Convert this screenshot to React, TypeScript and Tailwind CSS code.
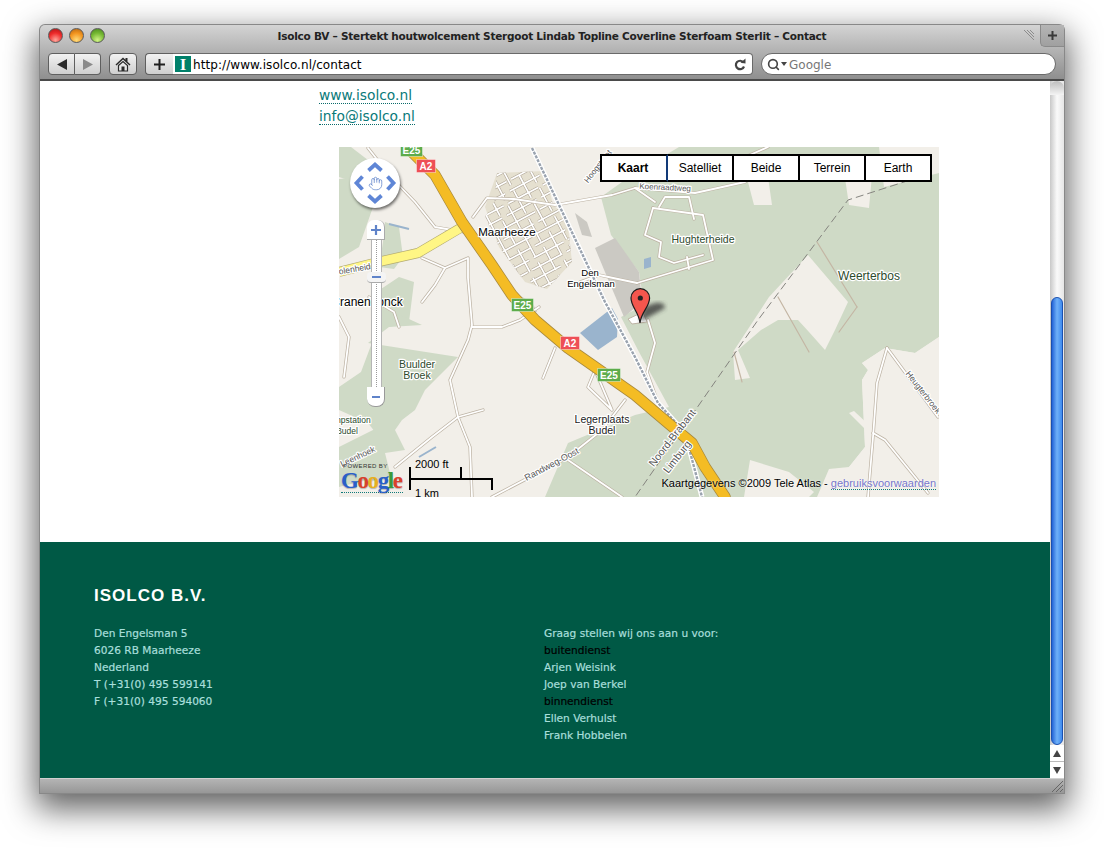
import React from "react";
import { Hand, Search } from "lucide-react";

const lucida = "font-['DejaVu_Sans',sans-serif]";

// road centre lines in map coordinates
const roads: string[] = [
  "29,1 52,30 76,55 96,80 125,85",
  "134,70 148,51 175,52 216,58 273,48 296,41 356,46 406,35 440,10",
  "83,111 106,121 96,138 83,155",
  "106,121 129,111 129,131 133,178 129,193 111,233 119,270 131,300 133,350",
  "133,180 163,180 181,173 200,160",
  "56,320 93,290 119,270 144,263",
  "153,350 229,310 263,283 286,253",
  "229,313 283,350",
  "249,240 273,263 256,223 249,240",
  "216,201 204,231",
  "548,201 538,236 534,290 529,350",
  "534,286 546,293 589,346",
  "548,201 599,270",
  "314,61 364,68 374,113 298,136",
  "314,61 306,88 322,95 320,110 335,116 364,108",
  "320,60 326,50 350,50 355,72",
  "348,110 350,122",
  "296,41 316,55",
  "309,173 316,196 308,225 319,256",
  "241,135 260,128 298,136",
  "429,0 395,15 380,30",
  "0,170 10,190 5,230",
  "30,150 55,165 60,180",
];

const trails: string[] = [
  "478,95 518,160",
  "518,160 500,185",
  "439,150 470,205",
  "395,205 403,235",
];

// name labels, x/y are the text centre
const labels = [
  { t: "Maarheeze", x: 168, y: 89, s: 11.5, c: "#000" },
  { t: "Den", x: 251, y: 129, s: 9.5, c: "#000" },
  { t: "Engelsman", x: 252, y: 140, s: 9.5, c: "#000" },
  { t: "Hughterheide", x: 364, y: 96, s: 10.5, c: "#2c4a2c" },
  { t: "Weerterbos", x: 530, y: 133, s: 12, c: "#2c4a2c" },
  { t: "Buulder", x: 78, y: 221, s: 10.5, c: "#2c4a2c" },
  { t: "Broek", x: 78, y: 232, s: 10.5, c: "#2c4a2c" },
  { t: "Legerplaats", x: 263, y: 276, s: 10.5, c: "#222" },
  { t: "Budel", x: 263, y: 287, s: 10.5, c: "#222" },
  { t: "Cranendonck", x: 28, y: 159, s: 12, c: "#000" },
];

const rotated = [
  { t: "Noord-Brabant", x: 336, y: 293, r: -52, s: 10.5 },
  { t: "Limburg", x: 341, y: 312, r: -52, s: 10.5 },
  { t: "Randweg-Oost", x: 214, y: 320, r: -28, s: 9 },
  { t: "Heugterbroek", x: 582, y: 247, r: 52, s: 8.5 },
  { t: "Koenraadtweg", x: 326, y: 43, r: 3, s: 8 },
  { t: "Molenheide", x: 15, y: 125, r: -10, s: 8.5 },
  { t: "Hoogstraat", x: 261, y: 21, r: -52, s: 8 },
  { t: "Leenhoek", x: 20, y: 312, r: -25, s: 8.5 },
];

const shields = [
  { t: "E25", x: 61, y: -4, w: 22, c: "#5dac4b" },
  { t: "A2", x: 77, y: 12, w: 19, c: "#ee4f56" },
  { t: "E25", x: 172, y: 151, w: 22, c: "#5dac4b" },
  { t: "A2", x: 221, y: 189, w: 19, c: "#ee4f56" },
  { t: "E25", x: 258, y: 221, w: 23, c: "#5dac4b" },
];

const ModeButton = ({ label, first }: { label: string; first?: boolean }) => (
  <div
    className={`h-full flex items-center justify-center bg-white border-y-2 border-r-2 border-black text-[12px] text-black ${
      first ? "w-[68px] border-l-2 font-bold border-r-[#123a78] pr-[2px]" : "w-[66px]"
    }`}
  >
    {label}
  </div>
);

const MapView = () => (
  <div className="relative w-[600px] h-[350px] ml-[299px] mt-[20px] overflow-hidden bg-[#f2efe9] font-['Liberation_Sans',sans-serif]">
    <svg width="600" height="350" viewBox="0 0 600 350" className="block">
      <defs>
        <clipPath id="town">
          <polygon points="158,26 206,24 214,58 228,70 233,115 208,142 186,135 160,100 146,70 155,55" />
        </clipPath>
        <filter id="pinShadow">
          <feGaussianBlur stdDeviation="2" />
        </filter>
      </defs>

      {/* forest and heath */}
      <g fill="#cfdac6">
        <polygon points="262,50 290,30 340,0 600,0 600,190 576,206 546,201 523,216 529,223 523,233 526,300 510,320 500,350 206,350 229,296 296,268 330,260 300,205 282,170 305,158 300,125 272,88" />
        <polygon points="0,30 30,40 38,20 12,0 0,0" />
        <polygon points="0,32 20,30 34,60 20,100 0,112" />
        <polygon points="46,75 60,80 64,110 55,122 40,120 44,95" />
        <polygon points="30,150 60,130 75,135 70,175 50,180" />
        <polygon points="46,161 83,178 50,180 29,196 119,210 86,243 76,263 63,273 56,283 66,303 46,306 52,330 30,335 40,290 29,276 0,263 0,240 22,225" />
        <polygon points="0,300 40,280 40,330 0,340" />
      </g>
      {/* open ground inside the forest */}
      <g fill="#f2efe9">
        <polygon points="409,35 429,30 433,58 415,58" />
        <polygon points="506,31 533,28 530,61 510,58" />
        <polygon points="540,0 600,0 600,26 545,40" />
        <polygon points="469,108 509,155 496,183 486,203 470,185 459,173 439,173 422,183 399,203 411,231 396,233 394,205 430,150" />
        <polygon points="600,190 576,206 546,201 523,216 529,223 523,233 526,300 510,320 490,322 478,350 600,350" />
        <polygon points="411,313 450,325 475,345 470,350 405,350" />
        <polygon points="510,266 515,264 530,278 526,282" />
      </g>
      <polygon points="146,60 158,26 206,24 214,58 228,70 233,115 208,142 186,135 160,100" fill="#e5e0d0" />

      {/* grey and water areas */}
      <polygon points="236,66 248,75 253,90 243,88" fill="#cbc9c3" />
      <polygon points="256,101 276,91 300,125 303,155 285,170 266,125" fill="#cbc9c3" />
      <polygon points="173,145 193,155 198,165 185,165" fill="#cbc9c3" />
      <polygon points="241,186 273,161 279,172 278,190 259,203" fill="#9ab4cd" />
      <polygon points="305,112 312,110 312,120 305,122" fill="#9ab4cd" />
      <path d="M50 77 L70 82 M97 300 L80 310 M88 219 L85 222" stroke="#9ab4cd" strokeWidth="2" fill="none" />

      <g fill="none" strokeLinejoin="round" strokeLinecap="round">
        {/* town streets */}
        <g clipPath="url(#town)">
          <g transform="rotate(-28 190 85)">
            {Array.from({ length: 20 }).map((_, i) => (
              <line key={`h${i}`} x1="110" x2="270" y1={-10 + i * 10} y2={-10 + i * 10} stroke="#ada394" strokeWidth="2.8" strokeDasharray="34 5" strokeDashoffset={i * 7} strokeLinecap="butt" />
            ))}
            {Array.from({ length: 14 }).map((_, i) => (
              <line key={`v${i}`} x1={112 + i * 12} x2={112 + i * 12} y1="-10" y2="190" stroke="#ada394" strokeWidth="2.8" strokeDasharray="26 6" strokeDashoffset={i * 11} strokeLinecap="butt" />
            ))}
            {Array.from({ length: 20 }).map((_, i) => (
              <line key={`hw${i}`} x1="110" x2="270" y1={-10 + i * 10} y2={-10 + i * 10} stroke="#fff" strokeWidth="1.7" strokeDasharray="34 5" strokeDashoffset={i * 7} strokeLinecap="butt" />
            ))}
            {Array.from({ length: 14 }).map((_, i) => (
              <line key={`vw${i}`} x1={112 + i * 12} x2={112 + i * 12} y1="-10" y2="190" stroke="#fff" strokeWidth="1.7" strokeDasharray="26 6" strokeDashoffset={i * 11} strokeLinecap="butt" />
            ))}
          </g>
        </g>

        {roads.map((p) => (
          <polyline key={`c${p}`} points={p} stroke="#bdb3a4" strokeWidth="3.2" />
        ))}
        {roads.map((p) => (
          <polyline key={`w${p}`} points={p} stroke="#fff" strokeWidth="1.8" />
        ))}
        {trails.map((p) => (
          <polyline key={p} points={p} stroke="#c4b6a4" strokeWidth="1.2" />
        ))}

        {/* railway */}
        <polyline points="193,1 266,155 276,173 296,210 319,256 346,286 363,350" stroke="#fff" strokeWidth="5" strokeLinecap="butt" />
        <polyline points="193,1 266,155 276,173 296,210 319,256 346,286 363,350" stroke="#9aa3af" strokeWidth="2.4" strokeDasharray="3 1.2" strokeLinecap="butt" />

        {/* province border */}
        <polyline points="593,26 509,53 419,173 296,350" stroke="#85847f" strokeWidth="1" strokeDasharray="8 4" strokeLinecap="butt" />

        {/* regional road */}
        <polyline points="0,125 39,115 79,106 96,96 123,80" stroke="#b3aa70" strokeWidth="10" strokeLinecap="butt" />
        <polyline points="0,125 39,115 79,106 96,96 125,79" stroke="#fff685" strokeWidth="8.8" strokeLinecap="butt" />

        {/* motorway */}
        <polyline points="68,0 96,28 123,75 153,118 173,148 196,173 229,201 296,248 329,276 353,296 366,320 386,350" stroke="#a88a3e" strokeWidth="11.5" strokeLinejoin="round" />
        <polyline points="68,0 96,28 123,75 153,118 173,148 196,173 229,201 296,248 329,276 353,296 366,320 386,350" stroke="#f4bc24" strokeWidth="10" strokeLinejoin="round" />
      </g>

      {/* small building under the pin */}
      <polygon points="289,172 304,165 308,175 293,177" fill="#fff" stroke="#bdb3a4" />

      {/* labels */}
      <g textAnchor="middle" className="[paint-order:stroke]" stroke="#fff" strokeWidth="2.4" strokeLinejoin="round">
        {labels.map((l) => (
          <text key={l.t} x={l.x} y={l.y} fontSize={l.s} fill={l.c}>
            {l.t}
          </text>
        ))}
        {rotated.map((l) => (
          <text key={l.t} transform={`translate(${l.x} ${l.y}) rotate(${l.r})`} fontSize={l.s} fill="#555">
            {l.t}
          </text>
        ))}
        <text x="8" y="276" fontSize="8.5" fill="#2c4a2c">Pompstation</text>
        <text x="8" y="287" fontSize="8.5" fill="#2c4a2c">Budel</text>
      </g>

      {/* road shields */}
      {shields.map((s) => (
        <g key={`${s.t}${s.x}`}>
          <rect x={s.x + 0.5} y={s.y + 0.5} width={s.w} height="13" fill={s.c} stroke="#fff" strokeOpacity="0.4" />
          <text x={s.x + s.w / 2 + 0.5} y={s.y + 11} textAnchor="middle" fontSize="10" fontWeight="bold" fill="#fff">
            {s.t}
          </text>
        </g>
      ))}

      {/* marker */}
      <path d="M301 175 L326 161 Q326 155 316 156 L305 160 Z" fill="#333" opacity="0.75" filter="url(#pinShadow)" />
      <path d="M301 176 C300 165 292 160 292 151 A9.3 9.3 0 1 1 310.6 151 C310.6 160 302 165 301 176 Z" fill="#f4564d" stroke="#1c1c1c" strokeWidth="1.2" />
      <circle cx="301.3" cy="151" r="2.6" fill="#222" />
    </svg>

    {/* pan control */}
    <div className="absolute left-[11px] top-[11px] w-[50px] h-[50px] rounded-full bg-white shadow-[1px_2px_3px_rgba(0,0,0,0.55)] flex items-center justify-center">
      <Hand size={15} strokeWidth={1.2} className="text-[#5f83c9]" />
      <svg width="50" height="50" viewBox="0 0 50 50" className="absolute left-0 top-0" fill="none" stroke="#5f86d6" strokeWidth="3.8">
        <path d="M18.500 12.500 L25 6.500 L31.500 12.500" />
        <path d="M18.500 37.500 L25 43.500 L31.500 37.500" />
        <path d="M12.500 18.500 L6.500 25 L12.500 31.500" />
        <path d="M37.500 18.500 L43.500 25 L37.500 31.500" />
      </svg>
    </div>

    {/* zoom slider */}
    <div className="absolute left-[28px] top-[73px] w-[18px] h-[187px] flex flex-col items-center">
      <div className="w-[18px] h-[20px] rounded-t-[7px] bg-white border-r border-b border-[#aaa] flex items-center justify-center text-[#5f83c9]">
        <svg width="10" height="10" viewBox="0 0 10 10"><path d="M5 0V10M0 5H10" stroke="currentColor" strokeWidth="2.2" /></svg>
      </div>
      <div className="relative flex-1 w-[11px] bg-white border-x border-[#b5b5b5] flex justify-center">
        <div className="w-px h-full border-l border-dotted border-[#9a9a9a]" />
        <div className="absolute left-[-5px] top-[32px] w-[19px] h-[11px] rounded-[4px] bg-[#f4f4f4] border-b border-[#aaa] flex items-center justify-center">
          <div className="w-[9px] h-[2px] bg-[#5f83c9]" />
        </div>
      </div>
      <div className="w-[18px] h-[20px] rounded-b-[8px] bg-white border-r border-b border-[#999] flex items-center justify-center">
        <div className="w-[8px] h-[2px] bg-[#5f83c9]" />
      </div>
    </div>

    {/* map type buttons */}
    <div className="absolute left-[261px] top-[7px] h-[28px] flex">
      <ModeButton label="Kaart" first />
      <ModeButton label="Satelliet" />
      <ModeButton label="Beide" />
      <ModeButton label="Terrein" />
      <ModeButton label="Earth" />
    </div>

    {/* google logo */}
    <div className="absolute left-[2px] top-[316px] w-[62px] border-b border-dotted border-[#0f7a7a] pb-[1px] leading-none">
      <div className="text-[6px] leading-[7px] tracking-[0.4px] text-[#333] pl-[2px]">POWERED BY</div>
      <div className="font-['Liberation_Serif',serif] text-[23px] leading-[21px] tracking-[-1.4px] font-bold [text-shadow:0_1px_1px_rgba(0,0,0,0.25)]">
        <span className="text-[#2a5fc9]">G</span>
        <span className="text-[#d9412c]">o</span>
        <span className="text-[#e8b020]">o</span>
        <span className="text-[#2a5fc9]">g</span>
        <span className="text-[#3a9a3a]">l</span>
        <span className="text-[#d9412c]">e</span>
      </div>
    </div>

    {/* scale */}
    <div className="absolute left-[70px] top-[320px] w-[84px] h-[23px] border-l-2 border-black">
      <div className="absolute left-0 top-[11px] w-[82px] h-[2px] bg-black" />
      <div className="absolute left-[49px] top-0 w-[2px] h-[12px] bg-black" />
      <div className="absolute right-0 top-[12px] w-[2px] h-[11px] bg-black" />
      <span className="absolute left-[4px] top-[-9px] text-[11px] leading-[13px] text-black whitespace-nowrap">2000 ft</span>
      <span className="absolute left-[4px] top-[20px] text-[11px] leading-[13px] text-black whitespace-nowrap">1 km</span>
    </div>

    {/* copyright */}
    <div className="absolute right-[3px] top-[330px] text-[11px] leading-[13px] text-black whitespace-nowrap [text-shadow:0_0_2px_#fff]">
      Kaartgegevens ©2009 Tele Atlas -{" "}
      <span className="text-[#7777cc] border-b border-dotted border-[#0f7a7a]">gebruiksvoorwaarden</span>
    </div>
  </div>
);

const TrafficLight = ({ colors }: { colors: string }) => (
  <div className={`w-[15px] h-[15px] rounded-full border border-[#5a5a5a] ${colors}`} />
);

const TitleBar = () => (
  <div className="relative h-[28px] shrink-0 flex items-center justify-center">
    <div className="absolute left-[8px] top-[3px] flex gap-[6px]">
      <TrafficLight colors="bg-[radial-gradient(circle_at_50%_85%,#ffa79c,#ee2a2a_55%,#a81416)]" />
      <TrafficLight colors="bg-[radial-gradient(circle_at_50%_85%,#ffdc7a,#f2941e_55%,#b06414)]" />
      <TrafficLight colors="bg-[radial-gradient(circle_at_50%_85%,#d2f487,#75b832_55%,#47851e)]" />
    </div>
    <span className={`${lucida} text-[10.5px] tracking-[-0.25px] font-bold text-[#222] mt-[-4px]`}>
      Isolco BV – Stertekt houtwolcement Stergoot Lindab Topline Coverline Sterfoam Sterlit – Contact
    </span>
    <svg width="12" height="12" viewBox="0 0 12 12" className="absolute right-[29px] top-[4px]" stroke="#8c8c8c">
      <path d="M1 1 L11 11 M4 1 L11 8 M7 1 L11 5" />
    </svg>
    <div className="absolute right-0 top-0 w-[24px] h-[22px] bg-linear-to-b from-[#b5b5b5] to-[#a0a0a0] border-l border-b border-[#8a8a8a] rounded-bl-[5px] flex items-center justify-center">
      <svg width="9" height="9" viewBox="0 0 9 9"><path d="M4.500 0V9M0 4.500H9" stroke="#3a3a3a" strokeWidth="2" /></svg>
    </div>
  </div>
);

const ToolButton = ({ className, children }: { className: string; children: React.ReactNode }) => (
  <div className={`h-[22px] border border-[#5f5f5f] bg-linear-to-b from-[#f2f2f2] to-[#cfcfcf] flex items-center justify-center ${className}`}>
    {children}
  </div>
);

const Toolbar = () => (
  <div className="h-[26px] shrink-0 flex items-start pl-[8px] pr-[8px]">
    <div className="flex">
      <ToolButton className="w-[27px] rounded-l-[4px]">
        <svg width="12" height="11" viewBox="0 0 12 11"><path d="M1 5.500L11 0V11Z" fill="#2b2b2b" /></svg>
      </ToolButton>
      <ToolButton className="w-[26px] rounded-r-[4px] border-l-0">
        <svg width="12" height="11" viewBox="0 0 12 11"><path d="M11 5.500L1 0V11Z" fill="#8a8a8a" /></svg>
      </ToolButton>
    </div>
    <ToolButton className="w-[28px] rounded-[4px] ml-[8px]">
      <svg width="16" height="15" viewBox="0 0 16 15">
        <path d="M8 0.500L0.500 7.500L1.500 8.500L8 2.500L14.500 8.500L15.500 7.500L12.500 4.700V1H10.500V2.800Z" fill="#2b2b2b" />
        <path d="M3.500 8.500L8 4.500L12.500 8.500V14H3.500Z" fill="#e8e8e8" stroke="#2b2b2b" strokeWidth="1.200" />
        <rect x="6.500" y="9.500" width="3" height="4.500" fill="#2b2b2b" />
      </svg>
    </ToolButton>
    <ToolButton className="w-[28px] rounded-l-[4px] border-r-0 ml-[8px]">
      <svg width="11" height="11" viewBox="0 0 11 11"><path d="M5.500 0V11M0 5.500H11" stroke="#1f1f1f" strokeWidth="2" /></svg>
    </ToolButton>
    <div className="w-[580px] h-[22px] bg-white border border-[#6a6a6a] border-l-0 rounded-r-[4px] flex items-center pl-[2px] pr-[6px]">
      <div className="w-[16px] h-[16px] bg-[#00806a] flex items-center justify-center">
        <div className="text-white font-['Liberation_Serif',serif] font-bold text-[17px] leading-none">I</div>
      </div>
      <span className={`${lucida} text-[12px] tracking-[0.07px] text-black ml-[2px] mt-[1px]`}>http://www.isolco.nl/contact</span>
      <svg width="12" height="13" viewBox="0 0 12 13" className="ml-auto" fill="none">
        <path d="M9.500 4.500A4.200 4.200 0 1 0 10 8.500" stroke="#444" strokeWidth="2.200" />
        <path d="M6.500 4.800L11.500 5.500V0.500Z" fill="#444" />
      </svg>
    </div>
    <div className="w-[295px] h-[22px] ml-[8px] bg-white border border-[#6a6a6a] rounded-full flex items-center pl-[5px]">
      <Search size={13} strokeWidth={3} className="text-[#444]" />
      <svg width="6" height="4" viewBox="0 0 6 4" className="ml-[1px]"><path d="M0 0H6L3 4Z" fill="#444" /></svg>
      <span className={`${lucida} text-[12px] text-[#777] ml-[2px] mt-[1px]`}>Google</span>
    </div>
  </div>
);

const Scrollbar = () => (
  <div className="w-[14px] shrink-0 flex flex-col bg-linear-to-r from-[#c8c8c8] via-[#fafafa] to-[#e6e6e6]">
    <div className="h-[14px] rounded-t-[7px] bg-linear-to-b from-[#bdbdbd] to-[#f4f4f4] shrink-0" />
    <div className="h-[202px] shrink-0" />
    <div className="h-[448px] shrink-0 mx-[1px] rounded-[6px] border border-[#1a50b0] bg-linear-to-r from-[#2463d6] via-[#6fb0f8] to-[#3f8bee]" />
    <div className="flex-1 bg-white flex flex-col items-center">
      <div className="flex-1 w-full flex items-center justify-center border-b border-[#bbb]">
        <svg width="8" height="7" viewBox="0 0 8 7"><path d="M4 0L8 7H0Z" fill="#444" /></svg>
      </div>
      <div className="flex-1 w-full flex items-center justify-center">
        <svg width="8" height="7" viewBox="0 0 8 7"><path d="M4 7L8 0H0Z" fill="#444" /></svg>
      </div>
    </div>
  </div>
);

const Footer = () => (
  <div className="h-[236px] mt-[45px] bg-[#005945] pl-[54px] pt-[43px] flex flex-col">
    <div className="font-['Liberation_Sans',sans-serif] font-bold text-[17px] leading-[22px] tracking-[1px] text-white">ISOLCO B.V.</div>
    <div className={`${lucida} flex mt-[18px] text-[10.6px] leading-[17px] text-[#a8dfdb] [-webkit-text-stroke:0.2px]`}>
      <div className="w-[450px]">
        <p>Den Engelsman 5</p>
        <p>6026 RB Maarheeze</p>
        <p>Nederland</p>
        <p>T (+31(0) 495 599141</p>
        <p>F (+31(0) 495 594060</p>
      </div>
      <div>
        <p>Graag stellen wij ons aan u voor:</p>
        <p className="text-black">buitendienst</p>
        <p>Arjen Weisink</p>
        <p>Joep van Berkel</p>
        <p className="text-black">binnendienst</p>
        <p>Ellen Verhulst</p>
        <p>Frank Hobbelen</p>
      </div>
    </div>
  </div>
);

const App: React.FC = () => {
  return (
    <div className="w-[1104px] h-[848px] bg-white overflow-hidden pt-[25px] pl-[40px]">
      <div className="w-[1024px] h-[768px] flex flex-col rounded-t-[5px] bg-[#8e8e8e] shadow-[0_0_0_1px_#888,0_12px_32px_4px_rgba(0,0,0,0.62)]">
        <div className="h-[56px] shrink-0 flex flex-col rounded-t-[5px] bg-linear-to-b from-[#d4d4d4] to-[#8f8f8f] border-b-2 border-[#4a4a4a]">
          <TitleBar />
          <Toolbar />
        </div>
        <div className="flex-1 flex min-h-0 bg-white">
          <div className="flex-1 flex flex-col min-w-0">
            <div className={`${lucida} pl-[279px] pt-[4px] text-[13.8px] leading-[21px] text-[#0a7a7a]`}>
              <div>
                <span className="border-b border-dotted border-[#0a6a6a]">www.isolco.nl</span>
              </div>
              <div>
                <span className="border-b border-dotted border-[#0a6a6a]">info@isolco.nl</span>
              </div>
            </div>
            <MapView />
            <Footer />
          </div>
          <Scrollbar />
        </div>
        <div className="relative h-[15px] shrink-0 bg-linear-to-b from-[#b4b4b4] to-[#979797] border-t border-[#d0d0d0]">
          <svg width="12" height="12" viewBox="0 0 12 12" className="absolute right-[1px] bottom-[1px]" stroke="#666">
            <path d="M1 12 L12 1 M5 12 L12 5 M9 12 L12 9" />
          </svg>
        </div>
      </div>
    </div>
  );
};

export default App;
